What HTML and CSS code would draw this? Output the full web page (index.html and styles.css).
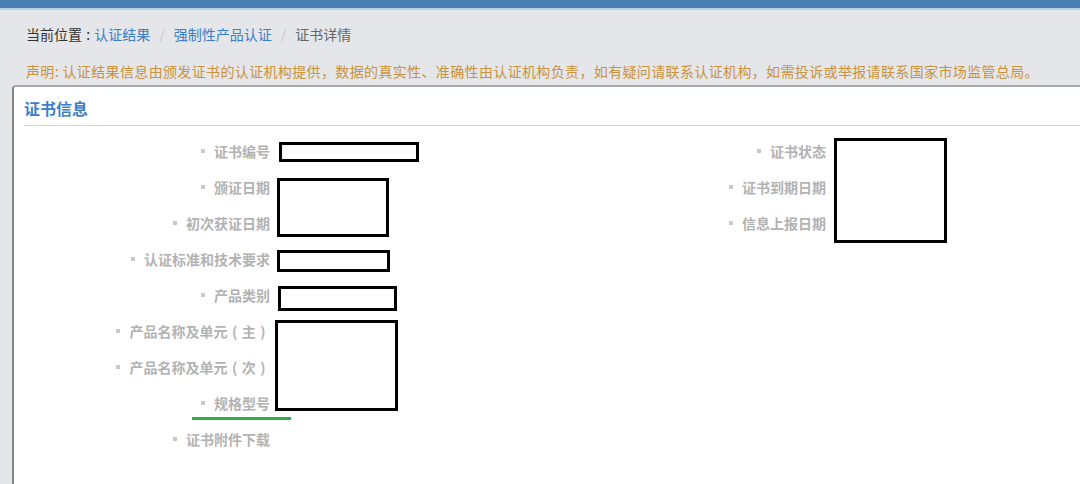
FILE: index.html
```html
<!DOCTYPE html>
<html lang="zh-CN">
<head>
<meta charset="utf-8">
<title>证书详情</title>
<link rel="stylesheet" href="styles.css">
</head>
<body>
<div class="topbar"></div>
<div class="crumbs">
  <span class="here">当前位置</span><span class="colon"> : </span><a class="link">认证结果</a><span class="sep">/</span><a class="link">强制性产品认证</a><span class="sep">/</span><span class="current">证书详情</span>
</div>
<div class="notice">声明: 认证结果信息由颁发证书的认证机构提供，数据的真实性、准确性由认证机构负责，如有疑问请联系认证机构，如需投诉或举报请联系国家市场监管总局。</div>
<div class="panel">
  <div class="panel-title">证书信息</div>
  <div class="fields">
    <div class="col">
      <div class="row"><span class="label">证书编号</span><span class="value"></span></div>
      <div class="row"><span class="label">颁证日期</span><span class="value"></span></div>
      <div class="row"><span class="label">初次获证日期</span><span class="value"></span></div>
      <div class="row"><span class="label">认证标准和技术要求</span><span class="value"></span></div>
      <div class="row"><span class="label">产品类别</span><span class="value"></span></div>
      <div class="row"><span class="label">产品名称及单元<span class="paren">(</span>主<span class="paren">)</span></span><span class="value"></span></div>
      <div class="row"><span class="label">产品名称及单元<span class="paren">(</span>次<span class="paren">)</span></span><span class="value"></span></div>
      <div class="row"><span class="label">规格型号</span><span class="value"></span></div>
      <div class="row"><span class="label">证书附件下载</span><span class="value"></span></div>
    </div>
    <div class="col">
      <div class="row"><span class="label">证书状态</span><span class="value"></span></div>
      <div class="row"><span class="label">证书到期日期</span><span class="value"></span></div>
      <div class="row"><span class="label">信息上报日期</span><span class="value"></span></div>
    </div>
  </div>
</div>
<div class="mark box" style="left:279px;top:142px;width:140px;height:20px"></div>
<div class="mark box" style="left:277px;top:178px;width:112px;height:59px"></div>
<div class="mark box" style="left:277px;top:250px;width:113px;height:22px"></div>
<div class="mark box" style="left:278px;top:286px;width:119px;height:25px"></div>
<div class="mark box" style="left:275px;top:320px;width:123px;height:91px"></div>
<div class="mark box" style="left:834px;top:138px;width:113px;height:105px"></div>
<div class="mark underline" style="left:192px;top:417px;width:99px;height:3px"></div>
</body>
</html>
```
FILE: styles.css
```css
html, body {
  margin: 0;
  padding: 0;
}
body {
  background: #e5e6ea;
  font-family: "Noto Sans CJK SC", "Microsoft YaHei", "Liberation Sans", sans-serif;
  font-size: 14px;
  color: #333;
  overflow: hidden;
  height: 484px;
  position: relative;
}
.topbar {
  height: 8px;
  background: #4a7fb3;
  border-bottom: 2px solid #b4cfe9;
}
.crumbs {
  padding: 13px 0 0 26px;
  line-height: 22px;
  white-space: nowrap;
}
.here { color: #333; }
.colon { color: #333; white-space: pre; padding: 0 1px; }
.link { color: #3b7ec6; text-decoration: none; }
.sep { color: #c8c8c8; padding: 0 9px; }
.current { color: #666; }
.notice {
  padding: 15px 0 0 26px;
  line-height: 22px;
  color: #c9933b;
  white-space: nowrap;
  letter-spacing: 0.36px;
}
.panel {
  margin: 3px 0 0 12px;
  background: #fff;
  border-top: 2px solid #a7a7a7;
  border-left: 2px solid #858585;
  border-top-left-radius: 4px;
  height: 420px;
}
.panel-title {
  margin-left: 10px;
  padding: 10px 0 6px;
  line-height: 22px;
  font-size: 16px;
  font-weight: bold;
  color: #3f7fc8;
  border-bottom: 1px solid #d2d2d2;
}
.fields {
  display: flex;
  padding-top: 7px;
}
.col {
  display: flex;
  flex-direction: column;
  flex: 0 0 556px;
}
.row {
  display: flex;
  align-items: center;
  height: 36px;
}
.label {
  width: 256px;
  text-align: right;
  font-weight: bold;
  color: #b2b2b2;
  white-space: nowrap;
}
.label::before {
  content: "";
  display: inline-block;
  width: 4px;
  height: 4px;
  background: #c9c9c9;
  margin-right: 9px;
  vertical-align: middle;
  position: relative;
  top: -2px;
}
.paren {
  padding: 0 4.5px;
}
.value {
  flex: 1;
}
.mark {
  position: absolute;
  box-sizing: border-box;
}
.box {
  border: 3px solid #000;
  background: #fff;
}
.underline {
  background: #2fae4e;
}
```
